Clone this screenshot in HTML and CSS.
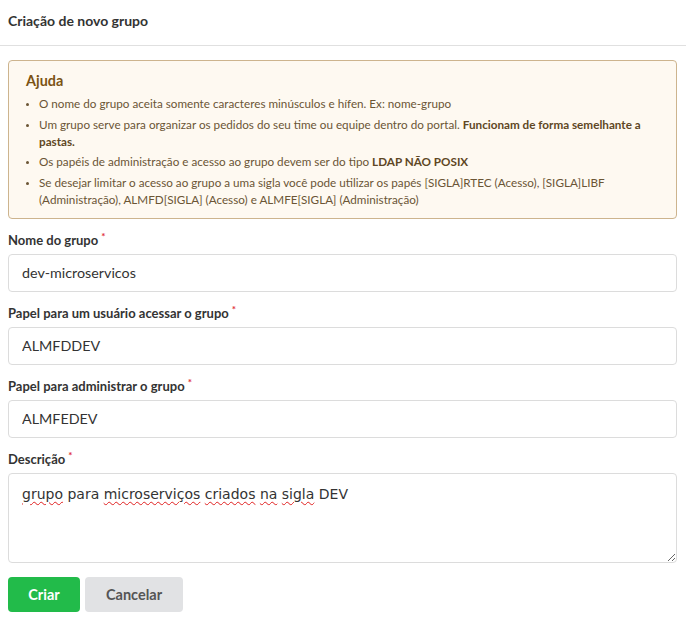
FILE: index.html
```html
<!DOCTYPE html>
<html lang="pt-BR">
<head>
<meta charset="utf-8">
<title>Criação de novo grupo</title>
<link rel="stylesheet" href="styles.css">
</head>
<body>
<header class="head">Criação de novo grupo</header>
<main class="content">
  <section class="help">
    <h2 class="help-title">Ajuda</h2>
    <ul class="help-list">
      <li>O nome do grupo aceita somente caracteres minúsculos e hífen. Ex: nome-grupo</li>
      <li>Um grupo serve para organizar os pedidos do seu time ou equipe dentro do portal. <b>Funcionam de forma semelhante a pastas.</b></li>
      <li>Os papéis de administração e acesso ao grupo devem ser do tipo <b>LDAP NÃO POSIX</b></li>
      <li>Se desejar limitar o acesso ao grupo a uma sigla você pode utilizar os papés [SIGLA]RTEC (Acesso), [SIGLA]LIBF (Administração), ALMFD[SIGLA] (Acesso) e ALMFE[SIGLA] (Administração)</li>
    </ul>
  </section>

  <div class="field">
    <label class="label">Nome do grupo<span class="req">*</span></label>
    <input class="input" type="text" value="dev-microservicos">
  </div>
  <div class="field">
    <label class="label">Papel para um usuário acessar o grupo<span class="req">*</span></label>
    <input class="input" type="text" value="ALMFDDEV">
  </div>
  <div class="field">
    <label class="label">Papel para administrar o grupo<span class="req">*</span></label>
    <input class="input" type="text" value="ALMFEDEV">
  </div>
  <div class="field">
    <label class="label">Descrição<span class="req">*</span></label>
    <div class="textarea"><span class="sp">grupo</span> para <span class="sp">microserviços</span> <span class="sp">criados</span> <span class="sp">na</span> <span class="sp">sigla</span> DEV</div>
  </div>

  <div class="actions">
    <button class="btn btn-primary" type="button">Criar</button>
    <button class="btn btn-secondary" type="button">Cancelar</button>
  </div>
</main>
</body>
</html>
```

FILE: styles.css
```css
* { box-sizing: border-box; }
html, body { margin: 0; padding: 0; background: #fff; }
body {
  font-family: Lato, "Noto Sans", sans-serif;
  color: #333;
}
.head {
  height: 46px;
  padding: 12px 8px 0;
  font-size: 14px;
  font-weight: 700;
  line-height: 18px;
  color: #333;
  border-bottom: 1px solid #e0e0e0;
}
.content {
  padding: 14px 9px 0 8px;
}
.help {
  background: #fef9f1;
  border: 1px solid #cdb48e;
  border-radius: 4px;
  padding: 10px 16px 10px 17px;
}
.help-title {
  margin: 0 0 4px;
  font-size: 14.4px;
  font-weight: 700;
  line-height: 20px;
  color: #7b5314;
}
.help-list {
  margin: 0;
  padding: 0 0 0 13px;
  font-size: 11.7px;
  line-height: 17px;
  color: #6b5535;
}
.help-list li { margin-bottom: 3.5px; }
.help-list li:last-child { margin-bottom: 0; }
.help-list li::marker { font-size: 9px; }
.help-list b { font-weight: 700; color: #5f4724; }

.field {
  display: flex;
  flex-direction: column;
  margin-top: 12px;
}
.label {
  font-size: 13px;
  font-weight: 700;
  line-height: 19px;
  color: #333;
  margin-bottom: 4px;
}
.req {
  color: #e0303a;
  font-size: 10px;
  line-height: 0;
  vertical-align: 5px;
  margin-left: 3px;
}
.input {
  height: 38px;
  border: 1px solid #dcdcdc;
  border-radius: 4px;
  padding: 0 13px;
  font-family: Lato, "Noto Sans", sans-serif;
  font-size: 14.3px;
  color: #333;
  background: #fff;
  outline: none;
}
.textarea {
  height: 90px;
  border: 1px solid #dcdcdc;
  border-radius: 4px;
  padding: 11px 13px;
  font-family: "DejaVu Sans", sans-serif;
  font-size: 14px;
  line-height: 18px;
  color: #333;
  resize: both;
  overflow: auto;
}
.sp {
  text-decoration: underline wavy #e02020;
  text-decoration-thickness: 1px;
  text-underline-offset: 2px;
}
.actions {
  display: flex;
  gap: 5px;
  margin-top: 14px;
}
.btn {
  height: 35px;
  border: none;
  border-radius: 4px;
  font-family: Lato, "Noto Sans", sans-serif;
  font-size: 14.5px;
  font-weight: 700;
  padding: 0;
  cursor: pointer;
}
.btn-primary {
  background: #22bb4a;
  color: #fff;
  width: 72px;
}
.btn-secondary {
  background: #e1e2e4;
  color: #555;
  width: 98px;
}
```
